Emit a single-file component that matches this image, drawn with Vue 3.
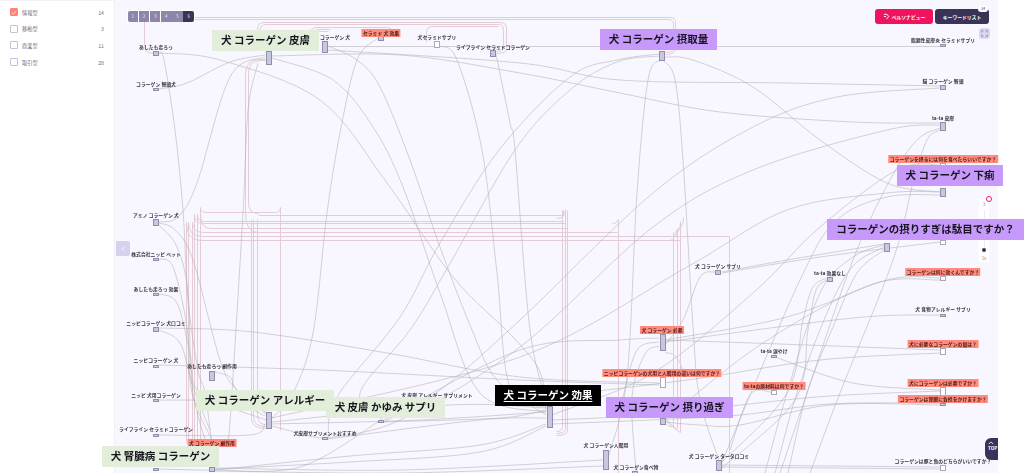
<template>
  <div class="page">
    <aside class="sidebar">
      <ul class="filters">
        <li v-for="f in filters" :key="f.name" class="filter">
          <span class="check" :class="{ on: f.on }">
            <svg v-if="f.on" viewBox="0 0 8 8" width="7" height="7">
              <path d="M1.2 4.2 3.2 6 6.8 1.8" fill="none" stroke="#fff" stroke-width="1" />
            </svg>
          </span>
          <span class="filter-name">{{ f.name }}</span>
          <span class="filter-count">{{ f.count }}</span>
        </li>
      </ul>
    </aside>

    <main class="canvas">
      <svg class="edges" viewBox="115 0 883 473" width="883" height="473">
        <g fill="none" stroke="#e3ccd5" stroke-width="1" transform="translate(0.5 0.5)">
          <path v-for="(d, i) in pinkPaths" :key="i" :d="d" />
        </g>
        <g fill="none" stroke="#b0aeb2" stroke-width="0.55">
          <path v-for="(d, i) in grayPaths" :key="i" :d="d" />
        </g>
      </svg>

      <div class="zoom">
        <span class="zoom-dot"></span>
        <span class="zoom-top">3</span>
        <span class="zoom-track"></span>
        <span class="zoom-knob"></span>
        <span class="zoom-bottom">1x</span>
      </div>

      <div
        v-for="n in nodes"
        :key="n.x + '-' + n.y"
        class="node"
        :class="{ blank: n.blank }"
        :style="{ left: n.x - 115 + 'px', top: n.y + 'px', height: n.h + 'px' }"
      ></div>

      <span
        v-for="l in labels"
        :key="l.t + l.y"
        class="label"
        :style="{ left: l.x - 115 + 'px', top: l.y + 'px' }"
      >{{ l.t }}</span>

      <span
        v-for="l in redLabels"
        :key="l.t"
        class="label red"
        :style="{ left: l.x - 115 + 'px', top: l.y + 'px' }"
      >{{ l.t }}</span>

      <span
        v-for="b in bigLabels"
        :key="b.t"
        class="big"
        :class="b.kind"
        :style="{ left: b.x - 115 + 'px', top: b.y + 'px', width: b.w + 'px' }"
      >{{ b.t }}</span>

      <div class="levels">
        <button v-for="n in 6" :key="n" class="level" :class="{ active: n === 6 }">{{ n }}</button>
      </div>

      <button class="collapse">
        <svg viewBox="0 0 6 8" width="4" height="6">
          <path d="M4.5 1 1.5 4 4.5 7" fill="none" stroke="#fff" stroke-width="1.2" />
        </svg>
      </button>

      <div class="actions">
        <button class="action pink">
          <svg viewBox="0 0 8 8" width="7" height="7">
            <path d="M1 1.5h3.5L6.5 4 4 7M1 4h2.5" fill="none" stroke="#fff" stroke-width="1.1" />
          </svg>
          ペルソナビュー
        </button>
        <button class="action dark">
          キーワードリスト
          <span class="badge">14</span>
        </button>
      </div>

      <button class="fullscreen">
        <svg viewBox="0 0 10 10" width="7" height="7">
          <path d="M1 3.5V1h2.5M6.5 1H9v2.5M9 6.5V9H6.5M3.5 9H1V6.5" fill="none" stroke="#77749a" stroke-width="1" />
        </svg>
      </button>

      <button class="top-btn">
        <svg viewBox="0 0 8 5" width="6" height="4">
          <path d="M1 4 4 1l3 3" fill="none" stroke="#fff" stroke-width="1.1" />
        </svg>
        <span>TOP</span>
      </button>
    </main>
  </div>
</template>

<script setup>
const filters = [
  { name: "情報型", count: 14, on: true },
  { name: "移動型", count: 3 },
  { name: "商業型", count: 11 },
  { name: "取引型", count: 28 },
];

// nodes of the keyword map: left, top, height (width is always 6-7px)
const nodes = [
  { x: 153, y: 51, h: 5 },
  { x: 153, y: 88, h: 3 },
  { x: 265.5, y: 51, h: 14 },
  { x: 322, y: 41, h: 12 },
  { x: 378, y: 36, h: 5 },
  { x: 434, y: 41, h: 7, blank: true },
  { x: 490, y: 50, h: 7 },
  { x: 659, y: 51, h: 10 },
  { x: 940, y: 44, h: 3 },
  { x: 940, y: 85, h: 5 },
  { x: 940, y: 122, h: 9 },
  { x: 940, y: 163, h: 4, blank: true },
  { x: 940, y: 188, h: 9 },
  { x: 884, y: 243, h: 9 },
  { x: 940, y: 240, h: 5, blank: true },
  { x: 827, y: 277, h: 5 },
  { x: 940, y: 276, h: 5, blank: true },
  { x: 940, y: 314, h: 3 },
  { x: 940, y: 348, h: 7, blank: true },
  { x: 771, y: 355, h: 3 },
  { x: 771, y: 390, h: 5, blank: true },
  { x: 940, y: 387, h: 9, blank: true },
  { x: 940, y: 403, h: 3 },
  { x: 940, y: 465, h: 6, blank: true },
  { x: 715.5, y: 460, h: 11 },
  { x: 632, y: 471, h: 6 },
  { x: 603, y: 450, h: 20 },
  { x: 546.5, y: 406, h: 22 },
  { x: 659.5, y: 418, h: 7 },
  { x: 659.5, y: 377, h: 11, blank: true },
  { x: 659.5, y: 334, h: 17 },
  { x: 715, y: 270, h: 5 },
  { x: 378, y: 420, h: 3 },
  { x: 322, y: 437, h: 3 },
  { x: 265.5, y: 412, h: 17 },
  { x: 209, y: 467, h: 5 },
  { x: 209, y: 371, h: 10 },
  { x: 153, y: 365, h: 2.5 },
  { x: 153, y: 399, h: 2.5 },
  { x: 153, y: 434, h: 2.5 },
  { x: 153, y: 468, h: 2.5 },
  { x: 153, y: 327, h: 5 },
  { x: 153, y: 293, h: 2.5 },
  { x: 153, y: 258, h: 2.5 },
  { x: 153, y: 219, h: 7 },
];

const labels = [
  { t: "あしたも走ろっ", x: 156, y: 43 },
  { t: "コラーゲン 智頭犬", x: 156, y: 80 },
  { t: "コラーゲン 犬", x: 335, y: 33 },
  { t: "犬セラミドサプリ", x: 437, y: 33 },
  { t: "ライフライン セラミドコラーゲン", x: 493, y: 43 },
  { t: "脂漏性皮膚炎 セラミドサプリ", x: 943, y: 36 },
  { t: "猫 コラーゲン 智頭", x: 943, y: 77 },
  { t: "ta-ta 皮膚", x: 943, y: 114 },
  { t: "ta-ta 効果なし", x: 830, y: 269 },
  { t: "犬 食物アレルギー サプリ", x: 943, y: 305 },
  { t: "ta-ta 涙やけ", x: 774, y: 347 },
  { t: "コラーゲンは豚と魚のどちらがいいですか？", x: 943, y: 457 },
  { t: "犬 コラーゲン タータ口コミ", x: 719, y: 452 },
  { t: "犬 コラーゲン食べ物", x: 636, y: 463 },
  { t: "犬 コラーゲン人間用", x: 606, y: 441 },
  { t: "犬 コラーゲン サプリ", x: 718, y: 262 },
  { t: "犬 皮膚 アレルギー サプリメント", x: 437, y: 391 },
  { t: "犬皮膚サプリメントおすすめ", x: 325, y: 429 },
  { t: "あしたも走ろっ 副作用", x: 212, y: 362 },
  { t: "ニッピコラーゲン 犬", x: 156, y: 356 },
  { t: "ニッピ 犬用コラーゲン", x: 156, y: 391 },
  { t: "ライフライン セラミドコラーゲン", x: 156, y: 425 },
  { t: "ニッピコラーゲン 犬口コミ", x: 156, y: 319 },
  { t: "あしたも走ろっ 効果", x: 156, y: 285 },
  { t: "株式会社ニッピ ペット", x: 156, y: 250 },
  { t: "アミノ コラーゲン 犬", x: 156, y: 211 },
];

const redLabels = [
  { t: "セラミド 犬 効果", x: 381, y: 28.5 },
  { t: "コラーゲンを摂るには何を食べたらいいですか？", x: 943, y: 155 },
  { t: "コラーゲンは何に効くんですか？", x: 943, y: 268 },
  { t: "犬に必要なコラーゲンの量は？", x: 943, y: 340 },
  { t: "犬にコラーゲンは必要ですか？", x: 943, y: 379 },
  { t: "コラーゲンは腎臓に負担をかけますか？", x: 943, y: 395 },
  { t: "ta-taの原材料は何ですか？", x: 774, y: 382 },
  { t: "ニッピコラーゲンの犬用と人間用の違いは何ですか？", x: 662, y: 369 },
  { t: "犬 コラーゲン 必要", x: 662, y: 326 },
  { t: "犬 コラーゲン 副作用", x: 212, y: 439 },
];

const bigLabels = [
  { t: "犬 コラーゲン 皮膚", x: 212, y: 30, w: 107, kind: "green" },
  { t: "犬 コラーゲン 摂取量", x: 600, y: 29, w: 117, kind: "purple" },
  { t: "犬 コラーゲン 下痢", x: 897, y: 165, w: 106, kind: "purple" },
  { t: "コラーゲンの摂りすぎは駄目ですか？", x: 827, y: 219, w: 197, kind: "purple" },
  { t: "犬 コラーゲン アレルギー", x: 196, y: 390, w: 138, kind: "green" },
  { t: "犬 皮膚 かゆみ サプリ", x: 326, y: 397, w: 119, kind: "green" },
  { t: "犬 腎臓病 コラーゲン", x: 102, y: 446, w: 117, kind: "green" },
  { t: "犬 コラーゲン 効果", x: 495, y: 385, w: 106, kind: "black" },
  { t: "犬 コラーゲン 摂り過ぎ", x: 606, y: 397, w: 127, kind: "purple" },
];

// routed lines with rounded corners, on whole pixels so they stay crisp
const busLeft = [
  "M200 207Q200 212 206 212H258",
  "M280 207Q280 212 275 212H258",
  "M197 214Q197 221 204 221H563",
  "M194 214Q194 223 203 223H565",
  "M200 214Q200 228 210 228H567",
  "M192 222Q192 232 204 232H617",
  "M188 222Q188 236 202 236H729",
  "M186 222Q186 240 200 240H680",
  "M258 215H563Q563 215 563 210",
  "M565 209Q565 218 556 218",
  "M617 219Q617 223 612 223",
  "M683 217Q683 228 674 232",
  "M680 221Q680 232 672 236",
  "M677 228Q677 236 670 240",
];
const busDrops = [
  "M186 222V443",
  "M188 222V443",
  "M192 222V443",
  "M194 214V443",
  "M197 214V443",
  "M200 207V443",
  "M251 219V418Q251 428 265 428",
  "M253 219V416Q253 426 265 426",
  "M257 219V414Q257 424 265 424",
  "M280 207V430",
  "M562 210V426Q562 431 556 431",
  "M565 209V428Q565 433 556 433",
  "M567 210V430Q567 435 556 435",
  "M618 219V473",
  "M673 232V424Q673 429 666 424",
  "M677 228V428Q677 431 666 419",
  "M680 221V432Q680 433 666 421",
  "M729 236V473",
];
const pinkPaths = [
  ...busLeft,
  ...busDrops,
  "M194 17H670Q675 17 675 22V47Q675 54 665 54",
  "M194 19H668Q673 19 673 24V47Q673 52 665 52",
  "M257 47V29Q257 22 264 22H500Q506 22 506 28V48Q506 53 496 53",
  "M259 48V31Q259 24 266 24H498Q503 24 503 30V46Q503 51 496 51",
  "M310 40V33Q310 27 316 27H386Q392 27 392 32V36",
  "M313 41V34Q313 29 318 29H330",
  "M316 42V36Q316 31 320 31H328",
  "M426 41V32Q426 26 432 26H498",
  "M144 21V44Q144 53 153 53",
  "M265 59H258Q245 59 245 75V213Q245 232 258 232",
  "M265 60H260Q248 60 248 73V203Q248 213 258 213",
  "M665 352Q680 352 683 375",
];

// keyword links, sampled along each curve; each list is smoothed into one path
const links = [
  // left column
  [[159, 53], [164, 60], [175, 130], [183, 210], [188, 300], [198, 370], [205, 393], [212, 445]],
  [[159, 89], [187, 83], [230, 62], [265, 55]],
  [[159, 222], [178, 217], [197, 183], [230, 77], [265, 57]],
  [[159, 223], [175, 230], [193, 260], [220, 360], [237, 390], [268, 414]],
  [[159, 225], [177, 247], [188, 293], [193, 393], [215, 468]],
  [[159, 259], [173, 267], [187, 327], [192, 393], [212, 440]],
  [[159, 294], [177, 303], [190, 353], [200, 393], [266, 420]],
  [[159, 330], [180, 343], [193, 387], [210, 430]],
  [[159, 328], [253, 332], [387, 353], [520, 377], [659, 383]],
  [[159, 365], [320, 370], [520, 380], [659, 385]],
  [[215, 372], [230, 377], [237, 390], [266, 414]],
  [[258, 63], [248, 110], [243, 213], [232, 393], [228, 445]],
  // long arcs crossing the middle
  [[159, 53], [220, 60], [320, 100], [387, 183], [453, 277], [513, 337], [540, 372], [546, 410]],
  [[378, 38], [357, 60], [340, 133], [327, 213], [313, 333], [293, 393], [270, 420]],
  [[272, 58], [333, 80], [373, 127], [403, 187], [440, 293], [480, 393], [546, 412]],
  [[328, 46], [357, 60], [380, 87], [410, 160], [440, 247], [472, 330], [497, 380], [546, 415]],
  [[440, 46], [457, 60], [482, 150], [497, 273], [510, 387], [548, 408]],
  [[496, 54], [510, 123], [515, 150], [530, 330], [548, 407]],
  [[659, 54], [617, 60], [570, 77], [499, 150], [440, 243], [400, 317], [337, 397], [328, 438]],
  [[659, 56], [617, 62], [570, 90], [515, 150], [448, 267], [410, 330], [360, 393], [384, 421]],
  // top right
  [[660, 60], [648, 80], [637, 193], [627, 377], [609, 455]],
  [[663, 60], [675, 80], [683, 160], [693, 327], [700, 400], [719, 460]],
  [[665, 57], [693, 60], [753, 87], [820, 140], [887, 183], [940, 192]],
  [[328, 50], [520, 63], [620, 80], [787, 83], [940, 86]],
  [[272, 56], [400, 55], [520, 73], [620, 93], [720, 112], [853, 122], [940, 123]],
  [[940, 88], [837, 97], [753, 127], [653, 193], [520, 320], [440, 390], [384, 422]],
  [[940, 125], [887, 130], [753, 170], [653, 227], [520, 347], [400, 420], [328, 438]],
  [[940, 128], [917, 140], [890, 180], [853, 260], [807, 393], [780, 473]],
  [[940, 130], [927, 140], [913, 183], [893, 260], [840, 393], [810, 473]],
  [[940, 165], [897, 170], [820, 227], [753, 293], [653, 373], [552, 415]],
  [[940, 192], [887, 193], [787, 210], [687, 267], [520, 357], [272, 418]],
  [[940, 195], [887, 197], [837, 220], [800, 280], [722, 462]],
  // around the lower right cluster
  [[884, 245], [853, 257], [820, 293], [787, 393], [765, 473]],
  [[884, 247], [853, 266], [827, 313], [797, 393], [775, 473]],
  [[884, 250], [857, 273], [833, 327], [807, 393], [788, 473]],
  [[827, 278], [813, 287], [803, 320], [787, 393], [722, 462]],
  [[827, 280], [816, 290], [808, 330], [795, 400], [722, 468]],
  [[715, 272], [700, 277], [683, 320], [665, 345]],
  [[722, 272], [787, 260], [884, 244]],
  [[722, 273], [820, 257], [940, 242]],
  [[940, 278], [887, 280], [787, 317], [665, 340]],
  [[940, 280], [870, 285], [760, 345], [665, 420]],
  [[940, 315], [853, 318], [665, 342]],
  [[665, 340], [780, 344], [940, 350]],
  [[775, 357], [853, 383], [940, 390]],
  [[940, 353], [820, 360], [687, 380], [520, 400]],
  [[659, 338], [620, 340], [520, 350], [384, 420]],
  [[659, 342], [637, 350], [623, 397]],
  [[659, 346], [645, 354], [632, 397], [636, 471]],
  [[552, 420], [650, 415], [740, 405], [830, 396], [940, 391]],
  [[552, 424], [650, 420], [740, 415], [830, 404], [940, 403]],
  [[665, 422], [700, 425], [740, 425], [830, 405], [940, 405]],
  [[771, 392], [750, 395], [730, 450]],
  [[722, 465], [830, 466], [940, 467]],
  [[722, 467], [830, 468], [940, 469]],
  // lower left fan
  [[215, 470], [350, 456], [480, 445], [546, 424]],
  [[215, 469], [350, 462], [480, 452], [546, 426]],
  [[215, 468], [400, 470], [603, 460]],
  [[215, 471], [400, 473], [603, 466]],
  [[215, 470], [300, 467], [378, 422]],
  [[272, 424], [420, 420], [546, 412]],
  [[272, 422], [450, 405], [546, 408]],
  [[272, 426], [310, 436], [322, 438]],
  [[328, 439], [480, 420], [546, 418]],
  [[159, 435], [250, 435], [265, 424]],
  [[159, 400], [230, 402], [265, 416]],
  [[159, 469], [195, 470], [209, 470]],
  [[381, 422], [500, 418], [546, 410]],
];

function smooth(pts) {
  let d = `M${pts[0][0]} ${pts[0][1]}`;
  for (let i = 0; i < pts.length - 1; i++) {
    const p0 = pts[i - 1] || pts[i];
    const p1 = pts[i];
    const p2 = pts[i + 1];
    const p3 = pts[i + 2] || p2;
    const c1x = p1[0] + (p2[0] - p0[0]) / 6;
    const c1y = p1[1] + (p2[1] - p0[1]) / 6;
    const c2x = p2[0] - (p3[0] - p1[0]) / 6;
    const c2y = p2[1] - (p3[1] - p1[1]) / 6;
    d += `C${c1x.toFixed(1)} ${c1y.toFixed(1)} ${c2x.toFixed(1)} ${c2y.toFixed(1)} ${p2[0]} ${p2[1]}`;
  }
  return d;
}

const grayPaths = [...links.map(smooth), "M328 46.5H940"];
</script>

<style>
html,
body {
  margin: 0;
  background: #fff;
  overflow: hidden;
}
</style>

<style scoped>
.page {
  display: flex;
  width: 1024px;
  height: 473px;
  overflow: hidden;
  font-family: "Noto Sans CJK JP", "Noto Sans", sans-serif;
  color: #3a3850;
  background: #fff;
}

.sidebar {
  width: 115px;
  flex: none;
  border-right: 1px solid #f0eff6;
  border-top: 1px solid #f3f2f8;
  box-sizing: border-box;
}

.filters {
  list-style: none;
  margin: 0;
  padding: 3px 10px 0;
}

.filter {
  display: flex;
  align-items: center;
  height: 16.6px;
  font-size: 5.2px;
  color: #6f6d7c;
}

.check {
  width: 6px;
  height: 6px;
  border: 1px solid #c4c3d4;
  border-radius: 1px;
  display: flex;
  align-items: center;
  justify-content: center;
  box-sizing: content-box;
  margin-right: 4px;
  background: #fff;
}

.check.on {
  background: #ff8476;
  border-color: #ff8476;
}

.filter-name {
  flex: 1;
}

.canvas {
  position: relative;
  width: 883px;
  flex: none;
  background: #f8f7ff;
}

.edges {
  position: absolute;
  left: 0;
  top: 0;
}

.node {
  position: absolute;
  width: 6px;
  background: #c8c7e2;
  border: 0.7px solid #8f8da8;
  box-sizing: border-box;
  border-radius: 0.5px;
}

.node.blank {
  background: #fff;
  border-color: #a9a8b4;
}

.label {
  position: absolute;
  transform: translateX(-50%);
  font-size: 4.8px;
  font-weight: 700;
  line-height: 7px;
  letter-spacing: 0.05px;
  white-space: nowrap;
  color: #35343f;
  filter: blur(0.15px);
}

.label.red {
  height: 8px;
  line-height: 8px;
  padding: 0 1.5px;
  background: #ff8b7d;
  color: #4a1d1a;
}

.big {
  position: absolute;
  height: 21px;
  line-height: 20px;
  text-align: center;
  font-size: 10.5px;
  font-weight: 700;
  white-space: nowrap;
  color: #16151e;
  filter: blur(0.25px);
}

.big.green {
  background: #e2eeda;
}

.big.purple {
  background: #c699fb;
}

.big.black {
  background: #000;
  color: #fff;
  text-decoration: underline;
  text-underline-offset: 1.5px;
}

.levels {
  position: absolute;
  left: 12px;
  top: 10px;
  display: flex;
  gap: 0.6px;
  background: #fff;
  padding: 0.5px;
  border-radius: 2px;
}

.level {
  width: 10.6px;
  height: 11px;
  padding: 0;
  border: 0;
  font-size: 4.5px;
  font-family: inherit;
  color: #e8e6f5;
  background: #8a87aa;
}

.level:first-child {
  border-radius: 2px 0 0 2px;
}

.level.active {
  background: #3a3358;
  border-radius: 0 2px 2px 0;
}

.collapse {
  position: absolute;
  left: 1px;
  top: 241px;
  width: 14px;
  height: 15px;
  padding: 0;
  border: 0;
  border-radius: 0 2px 2px 0;
  background: #d4d2ee;
  display: flex;
  align-items: center;
  justify-content: center;
}

.actions {
  position: absolute;
  right: 9px;
  top: 9px;
  display: flex;
  gap: 2px;
}

.action {
  position: relative;
  height: 15px;
  padding: 0;
  border: 0;
  border-radius: 3px;
  font-size: 4.8px;
  font-family: inherit;
  font-weight: 700;
  color: #fff;
  display: flex;
  align-items: center;
  justify-content: center;
  gap: 2px;
}

.action.pink {
  width: 58px;
  background: #f0145e;
}

.action.dark {
  width: 54px;
  background: #3a3358;
}

.badge {
  position: absolute;
  right: 1px;
  top: -3px;
  width: 10px;
  height: 6px;
  border-radius: 3px;
  background: #fff;
  color: #77749a;
  font-size: 3.6px;
  line-height: 6px;
}

.fullscreen {
  position: absolute;
  left: 864px;
  top: 28px;
  width: 11px;
  height: 11px;
  padding: 0;
  border: 0;
  border-radius: 3px;
  background: #d9d7ee;
  display: flex;
  align-items: center;
  justify-content: center;
}

.zoom {
  position: absolute;
  left: 864px;
  top: 199px;
  width: 10px;
  height: 63px;
  background: #fff;
  font-size: 4.5px;
  color: #8a889a;
  text-align: center;
}

.zoom-dot {
  position: absolute;
  left: 6.5px;
  top: -3px;
  width: 6px;
  height: 6px;
  border: 1.6px solid #f0145e;
  border-radius: 50%;
  background: #fff;
  box-sizing: border-box;
}

.zoom-top {
  position: absolute;
  left: 0;
  right: 0;
  top: 2px;
}

.zoom-track {
  position: absolute;
  left: 4.5px;
  top: 11px;
  width: 1px;
  height: 40px;
  background: #eceaf4;
}

.zoom-knob {
  position: absolute;
  left: 3px;
  top: 49px;
  width: 4px;
  height: 4px;
  border-radius: 50%;
  background: #3a3358;
}

.zoom-bottom {
  position: absolute;
  left: 0;
  right: 0;
  top: 56px;
}

.top-btn {
  position: absolute;
  left: 870px;
  top: 438px;
  width: 13px;
  height: 22px;
  padding: 3px 0 0 3px;
  border: 0;
  border-radius: 6px 0 0 6px;
  background: #3a3358;
  color: #fff;
  font-size: 4.5px;
  font-weight: 700;
  font-family: inherit;
  overflow: hidden;
  display: flex;
  flex-direction: column;
  align-items: flex-start;
  box-sizing: border-box;
}
</style>
